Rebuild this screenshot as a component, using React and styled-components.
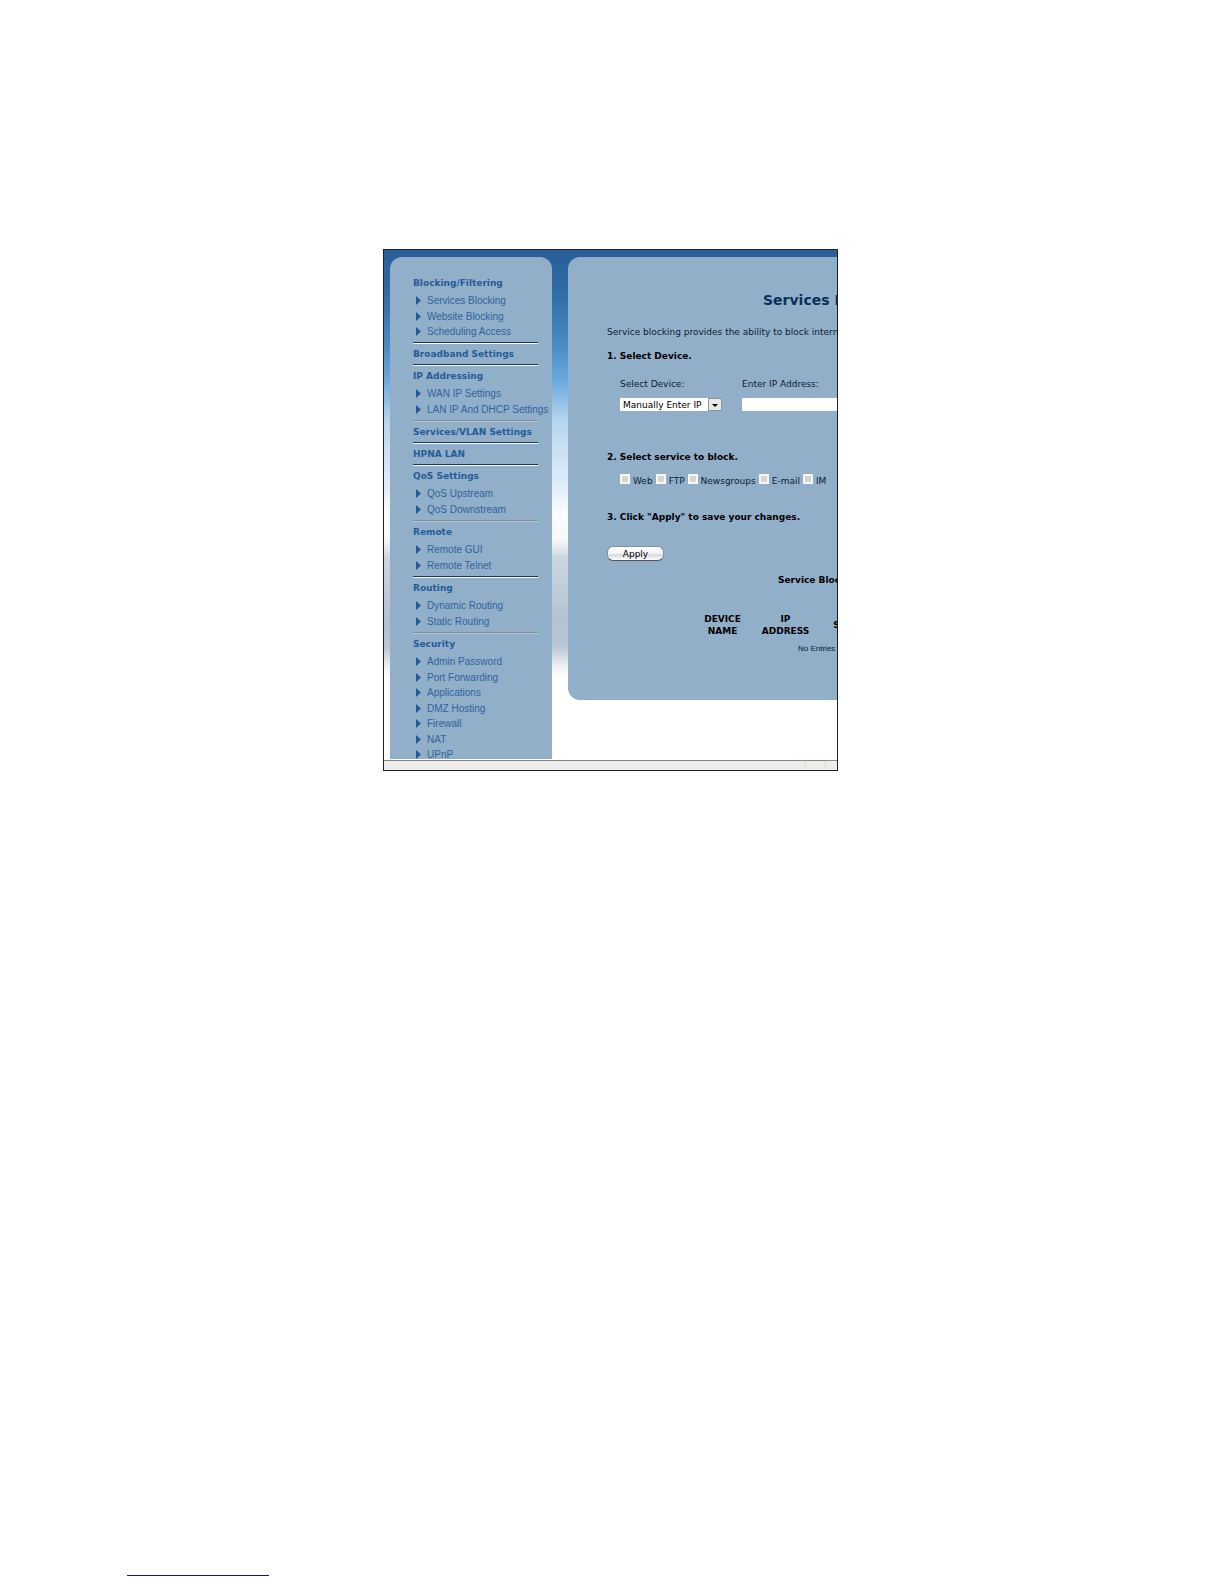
import React from 'react';
import styled, { createGlobalStyle } from 'styled-components';

const GlobalStyle = createGlobalStyle`
  * {
    box-sizing: border-box;
  }

  body {
    margin: 0;
    background: #ffffff;
    font-family: "DejaVu Sans", sans-serif;
    font-size: 9px;
    color: #0a1c33;
  }
`

const Page = styled.div`
  display: flex;
  flex-direction: column;
  min-height: 100vh;
  padding: 249px 130px 8px 127px;
`

const Window = styled.div`
  display: flex;
  flex-direction: column;
  width: 100%;
  max-width: 455px;
  margin: 0 auto;
  border: 1px solid #1c2126;
  background: #ffffff;
`

const Viewport = styled.div`
  display: flex;
  align-items: flex-start;
  gap: 16px;
  height: 509px;
  padding: 7px 0 0 6px;
  overflow: hidden;
  background: linear-gradient(
    #285e99 0px,
    #2e69a6 36px,
    #3a77b3 63px,
    #4b8cc4 96px,
    #6aa8da 129px,
    #8dbee5 149px,
    #b3d4ef 169px,
    #c9dff3 196px,
    #dfedfa 236px,
    #fafcff 262px,
    #f6f8fa 290px,
    #ccd6df 308px,
    #c0ccd8 340px,
    #b3c2d1 370px,
    #b9c6d3 396px,
    #f0f3f6 418px,
    #ffffff 428px
  );
`

const Sidebar = styled.nav`
  flex: 0 0 162px;
  padding: 16px 0 0 23px;
  border-radius: 12px 12px 0 0;
  background: #92afca;
`

const GroupTitle = styled.h2`
  margin: 0;
  font-size: 9px;
  line-height: 20px;
  color: #245c98;
  white-space: nowrap;
`

const LinkList = styled.ul`
  margin: 0;
  padding: 0 0 3px;
  list-style: none;
`

const LinkItem = styled.li`
  display: flex;
  align-items: center;
  height: 15px;

  &:nth-child(even) {
    height: 16px;
  }
`

const NavLink = styled.a`
  display: flex;
  align-items: center;
  gap: 6px;
  padding-left: 3px;
  font-family: "Liberation Sans", sans-serif;
  font-size: 10px;
  color: #2f639b;
  text-decoration: none;
  white-space: nowrap;
`

const Rule = styled.hr`
  width: 125px;
  height: 2px;
  margin: 0;
  border: none;
  border-top: 1px solid ${props => (props.$faint ? '#868d93' : '#17395f')};
  border-bottom: 1px solid ${props => (props.$faint ? '#b3c5d6' : '#ffffff')};
`

const Main = styled.main`
  flex: 0 0 500px;
  height: 443px;
  padding: 33px 0 0 39px;
  border-radius: 12px;
  background: #92afca;
`

const Title = styled.h1`
  margin: 0;
  padding-left: 156px;
  font-size: 14px;
  line-height: 20px;
  color: #0b2f5c;
  white-space: nowrap;
`

const Intro = styled.p`
  margin: 16px 0 6px;
  line-height: 12px;
  white-space: nowrap;
`

const Step = styled.h3`
  margin: 0;
  font-size: 9px;
  line-height: 24px;
  color: #000000;
`

const DeviceRow = styled.div`
  display: flex;
  gap: 20px;
  height: 77px;
  padding: 10px 0 0 13px;
`

const Field = styled.label`
  display: flex;
  flex-direction: column;
  gap: 8px;
  width: ${props => props.$width};
  line-height: 12px;
`

const Select = styled.select`
  width: 102px;
  height: 13px;
  padding: 0 0 0 3px;
  border: none;
  border-radius: 0;
  appearance: none;
  background: #ffffff;
  font-family: inherit;
  font-size: 9px;
  color: #000000;
`

const SelectBox = styled.span`
  display: grid;
  align-items: center;

  & > * {
    grid-area: 1 / 1;
  }
`

const SelectArrow = styled.svg`
  justify-self: end;
  pointer-events: none;
`

const TextInput = styled.input`
  width: 150px;
  height: 13px;
  padding: 0 3px;
  border: none;
  background: #ffffff;
  font-family: inherit;
  font-size: 9px;
`

const ServiceRow = styled.div`
  display: flex;
  gap: 3px;
  height: 36px;
  padding: 5px 0 0 13px;
`

const Service = styled.label`
  display: flex;
  align-items: flex-start;
  gap: 3px;
  line-height: 15px;
`

const Checkbox = styled.input`
  width: 10px;
  height: 10px;
  margin: 0;
  appearance: none;
  border: 2px solid #f6f6f3;
  background: #d3d5d3;
`

const ApplyButton = styled.button`
  width: 57px;
  height: 15px;
  margin-top: 17px;
  padding: 0;
  border: 1px solid #7f90a1;
  border-bottom-color: #4c5965;
  border-radius: 6px;
  background: linear-gradient(#ffffff, #f2f3f4 50%, #d4dade 60%, #ffffff);
  font-family: inherit;
  font-size: 9px;
  line-height: 12px;
  color: #000000;
`

const TableTitle = styled.h3`
  margin: 12px 0 26px 171px;
  font-size: 9px;
  line-height: 14px;
  color: #000000;
  white-space: nowrap;
`

const Table = styled.table`
  width: 258px;
  margin-left: 84px;
  border-collapse: collapse;
  table-layout: fixed;
`

const HeadCell = styled.th`
  width: ${props => props.$width};
  padding: 0 5px;
  font-size: 9px;
  line-height: 12px;
  color: #000000;
`

const EmptyCell = styled.td`
  padding: 0 0 0 107px;
  font-family: "Liberation Sans", sans-serif;
  font-size: 8px;
  line-height: 24px;
`

const StatusBar = styled.footer`
  display: flex;
  justify-content: flex-end;
  height: 10px;
  margin-top: 1px;
  border-top: 1px solid #8b8987;
  background: #efedec;
`

const StatusCell = styled.span`
  width: ${props => props.$width};
  border-left: 1px solid #dedbd9;
`

const FooterLink = styled.a`
  width: 142px;
  height: 12px;
  margin-top: auto;
  border-bottom: 1px solid #14148c;
`

const groups = [
  { title: 'Blocking/Filtering', links: ['Services Blocking', 'Website Blocking', 'Scheduling Access'] },
  { title: 'Broadband Settings', links: [] },
  { title: 'IP Addressing', links: ['WAN IP Settings', 'LAN IP And DHCP Settings'], faint: true },
  { title: 'Services/VLAN Settings', links: [] },
  { title: 'HPNA LAN', links: [] },
  { title: 'QoS Settings', links: ['QoS Upstream', 'QoS Downstream'], faint: true },
  { title: 'Remote', links: ['Remote GUI', 'Remote Telnet'] },
  { title: 'Routing', links: ['Dynamic Routing', 'Static Routing'], faint: true },
  {
    title: 'Security',
    links: ['Admin Password', 'Port Forwarding', 'Applications', 'DMZ Hosting', 'Firewall', 'NAT', 'UPnP'],
  },
]

const services = ['Web', 'FTP', 'Newsgroups', 'E-mail', 'IM']

function Bullet() {
  return (
    <svg width="5" height="9" viewBox="0 0 5 9" aria-hidden="true">
      <path d="M0 0L5 4.5L0 9Z" fill="#235a98" />
    </svg>
  )
}

function NavGroup({ group }) {
  return (
    <section>
      <GroupTitle>{group.title}</GroupTitle>
      {group.links.length > 0 && (
        <LinkList>
          {group.links.map(link => (
            <LinkItem key={link}>
              <NavLink href="#"><Bullet />{link}</NavLink>
            </LinkItem>
          ))}
        </LinkList>
      )}
      <Rule $faint={group.faint} />
    </section>
  )
}

export default function App() {
  return (
    <Page>
      <GlobalStyle />
      <Window>
        <Viewport>
          <Sidebar>
            {groups.map(group => (
              <NavGroup key={group.title} group={group} />
            ))}
          </Sidebar>

          <Main>
            <Title>Services Blocking</Title>
            <Intro>Service blocking provides the ability to block internet services</Intro>

            <Step>1. Select Device.</Step>
            <DeviceRow>
              <Field $width="102px">
                Select Device:
                <SelectBox>
                  <Select defaultValue="manual">
                    <option value="manual">Manually Enter IP</option>
                  </Select>
                  <SelectArrow width="14" height="13" viewBox="0 0 14 13" aria-hidden="true">
                    <rect x="0.5" y="0.5" width="13" height="12" fill="#e9e9e4" stroke="#8d959c" />
                    <path d="M4 6H10L7 9Z" fill="#000000" />
                  </SelectArrow>
                </SelectBox>
              </Field>
              <Field $width="150px">
                Enter IP Address:
                <TextInput type="text" />
              </Field>
            </DeviceRow>

            <Step>2. Select service to block.</Step>
            <ServiceRow>
              {services.map(service => (
                <Service key={service}>
                  <Checkbox type="checkbox" />
                  {service}
                </Service>
              ))}
            </ServiceRow>

            <Step>3. Click "Apply" to save your changes.</Step>
            <ApplyButton type="button">Apply</ApplyButton>

            <TableTitle>Service Blocking List</TableTitle>
            <Table>
              <thead>
                <tr>
                  <HeadCell $width="63px">DEVICE NAME</HeadCell>
                  <HeadCell $width="63px">IP ADDRESS</HeadCell>
                  <HeadCell $width="132px">SERVICES BLOCKED</HeadCell>
                </tr>
              </thead>
              <tbody>
                <tr>
                  <EmptyCell colSpan={3}>No Entries Defined</EmptyCell>
                </tr>
              </tbody>
            </Table>
          </Main>
        </Viewport>
        <StatusBar>
          <StatusCell $width="20px" />
          <StatusCell $width="12px" />
        </StatusBar>
      </Window>
      <FooterLink href="#" aria-label="Footer" />
    </Page>
  )
}
